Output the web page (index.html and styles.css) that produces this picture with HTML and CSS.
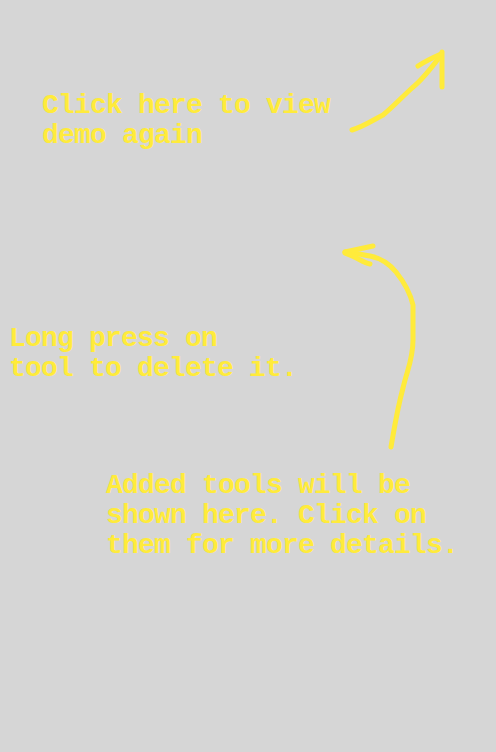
FILE: index.html
```html
<!DOCTYPE html>
<html>
<head>
<meta charset="utf-8">
<link rel="stylesheet" href="styles.css">
</head>
<body>
<div class="screen">
  <p class="tip tip-demo">Click here to view<br>demo again</p>
  <p class="tip tip-delete">Long press on<br>tool to delete it.</p>
  <p class="tip tip-added">Added tools will be<br>shown here. Click on<br>them for more details.</p>
  <svg class="arrows" width="496" height="752" viewBox="0 0 496 752">
    <g fill="none" stroke="#FFEB3B" stroke-width="5" stroke-linecap="round" stroke-linejoin="round">
      <path d="M352 130 C365 126 373 120 383 115 C393 107 402 97 412 88 C422 80 430 70 441 55"/>
      <path d="M442 52 L442 87"/>
      <path d="M418 66 C424 62 432 58 441 54"/>
      <path d="M391 447 C394 430 397 410 403 388 C407 370 413 360 413 340 L413 305 C410 292 404 282 396 272 C388 262 380 258 370 256 C360 254 352 253 345 252"/>
      <path d="M345 252 L373 246"/>
      <path d="M345 253 C355 256 362 262 370 264"/>
    </g>
  </svg>
</div>
</body>
</html>
```

FILE: styles.css
```css
html, body {
  margin: 0;
  padding: 0;
  background: #d6d6d6;
}
.screen {
  position: relative;
  width: 496px;
  height: 752px;
  overflow: hidden;
  display: flex;
  flex-direction: column;
}
.tip {
  margin: 0;
  color: #FFEB3B;
  font-family: "Liberation Mono", monospace;
  font-weight: bold;
  font-size: 28px;
  letter-spacing: -0.8px;
  line-height: 30px;
  white-space: nowrap;
}
.tip-demo {
  padding: 91px 0 0 42px;
}
.tip-delete {
  padding: 173px 0 0 9px;
}
.tip-added {
  padding: 87px 0 0 106px;
}
.arrows {
  position: absolute;
  left: 0;
  top: 0;
}
```
